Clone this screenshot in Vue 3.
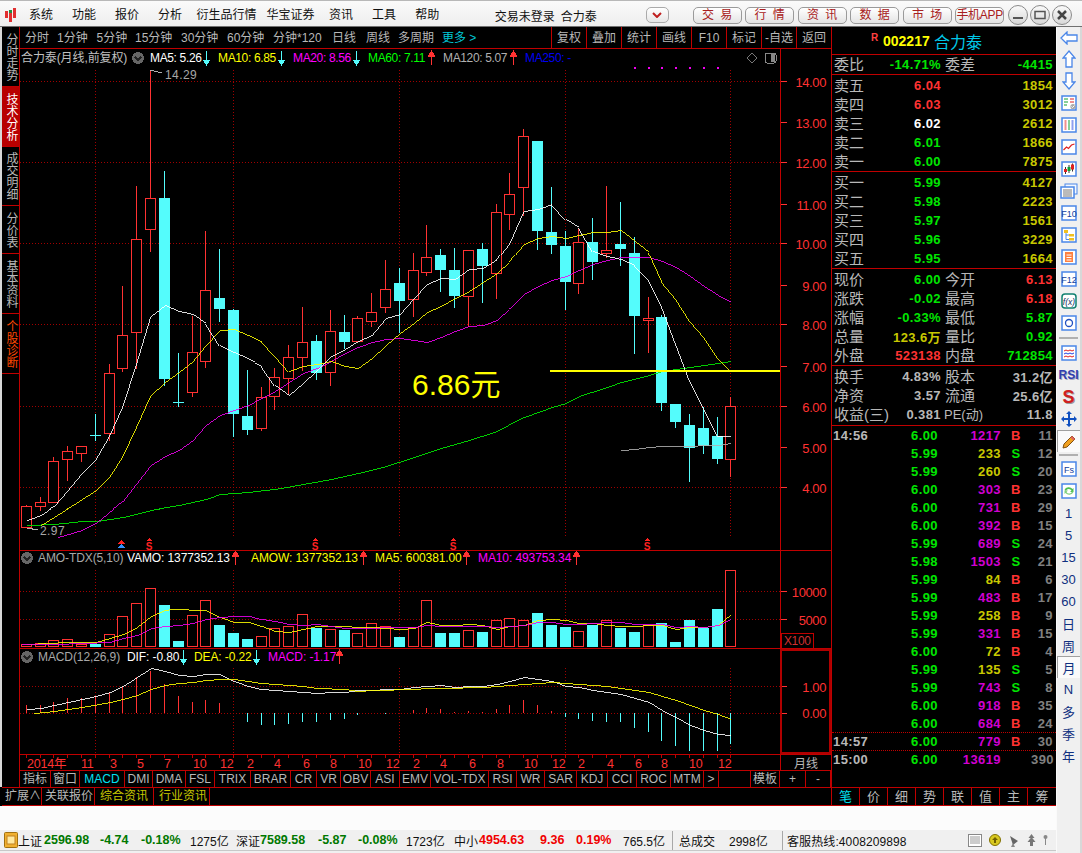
<template>
  <div class="win">
    <!-- 标题栏 -->
    <header class="titlebar">
      <svg class="logo" width="12" height="14" viewBox="0 0 12 14">
        <rect x="0" y="3" width="3" height="7" fill="#e03030" />
        <rect x="4" y="5" width="3" height="9" fill="#e03030" />
        <rect x="8" y="0" width="3" height="10" fill="#e03030" />
        <rect x="4" y="2" width="3" height="3" fill="#209040" />
      </svg>
      <nav class="menu">
        <span v-for="m in menus" :key="m" class="menu-item" :class="{ wide: m.length > 2 }">{{ m }}</span>
      </nav>
      <span class="title-text">交易未登录</span>
      <span class="title-name">合力泰</span>
      <button class="drop">
        <svg width="10" height="6" viewBox="0 0 10 6"><path d="M1 1l4 4 4-4" fill="none" stroke="#c02020" stroke-width="2" /></svg>
      </button>
      <div class="top-btns">
        <button v-for="b in topButtons" :key="b" class="top-btn" :class="{ app: b.includes('APP') }">{{ b }}</button>
      </div>
      <div class="win-btns">
        <span class="round"><svg width="14" height="14" viewBox="0 0 14 14"><path d="M2 10h10" stroke="#555" stroke-width="2" /></svg></span>
        <span class="round"><svg width="14" height="14" viewBox="0 0 14 14"><rect x="2" y="3.5" width="10" height="7" fill="none" stroke="#555" stroke-width="1.5" /></svg></span>
        <span class="round"><svg width="14" height="14" viewBox="0 0 14 14"><path d="M3 3l8 8M11 3l-8 8" stroke="#444" stroke-width="2.5" /></svg></span>
      </div>
    </header>

    <div class="body">
      <div class="col">
        <div class="main-row">
          <div class="workspace">
            <div class="top">
              <!-- 左侧竖排标签 -->
              <aside class="side">
                <div
                  v-for="t in sideTabs"
                  :key="t.name"
                  class="side-tab"
                  :class="t.cls"
                  :style="{ height: t.h + 'px' }"
                >
                  <span>{{ t.name }}</span>
                </div>
              </aside>

              <div class="center">
                <div class="tf-bar">
                  <div class="tf-list">
                    <span
                      v-for="t in periods"
                      :key="t.name"
                      class="tf"
                      :class="{ more: t.more }"
                      :style="{ width: t.w + 'px' }"
                    >{{ t.name }}</span>
                  </div>
                  <div class="tf-tools">
                    <span v-for="t in tfTools" :key="t" class="tf-tool">{{ t }}</span>
                  </div>
                </div>

                <!-- K线主图 -->
                <svg class="chart" width="811" height="502" viewBox="20 49 811 502">
                  <g class="grid">
                    <line v-for="y in mainGrid" :key="y" x1="20" x2="780" :y1="y" :y2="y" />
                    <line v-for="x in vGrid" :key="x" :x1="x" :x2="x" y1="70" y2="537" />
                  </g>
                  <g v-for="(c, i) in candles" :key="'c' + i">
                    <line :x1="c.x" :x2="c.x" :y1="c.hi" :y2="c.lo" :stroke="c.color" />
                    <rect
                      v-if="c.up"
                      :x="c.x - 5"
                      :y="c.top"
                      width="10"
                      :height="c.h"
                      fill="#000"
                      stroke="#ff3232"
                    />
                    <rect v-else :x="c.x - 5.5" :y="c.top - 0.5" width="11" :height="Math.max(c.h, 1)" fill="#54fcfc" />
                  </g>
                  <polyline class="ma" :points="ma120" stroke="#b0b0b0" />
                  <polyline class="ma" :points="ma60" stroke="#00f000" />
                  <polyline class="ma" :points="ma20" stroke="#f000f0" />
                  <polyline class="ma" :points="ma10" stroke="#ffff00" />
                  <polyline class="ma" :points="ma5" stroke="#ffffff" />

                  <rect x="550" y="370" width="230" height="2" fill="#ffff00" />
                  <text class="big" x="412" y="395">6.86元</text>

                  <path class="leader" d="M150 70l12 3" />
                  <text class="note" x="165" y="79">14.29</text>
                  <path class="leader" d="M27 528l11 2" />
                  <text class="note" x="40" y="535">2.97</text>

                  <rect v-for="x in dots" :key="x" :x="x" y="67" width="2" height="2" fill="#f000f0" />

                  <g v-for="(l, i) in legendMain" :key="l.text">
                    <text class="lg" :class="{ tight: i > 0 }" :x="l.x" y="62" :fill="l.color">{{ l.text }}</text>
                    <path v-if="l.arrow" class="arrow" :d="arrowPath(l.ax, 58, l.arrow)" :stroke="l.arrow === 'up' ? '#ff3232' : '#54fcfc'" :fill="l.arrow === 'up' ? '#ff3232' : '#54fcfc'" />
                  </g>
                  <circle cx="138" cy="58" r="6" fill="#666" />
                  <path d="M135 57l3 3 3-3" fill="none" stroke="#222" stroke-width="1.5" />
                  <path d="M752 53l5 5-5 5-5-5z" fill="none" stroke="#777" />
                  <rect x="765" y="53" width="11" height="10" rx="2" fill="#000" stroke="#888" />
                  <rect x="771" y="54" width="4" height="8" fill="#888" />

                  <g v-for="p in priceAxis" :key="p.t">
                    <line x1="781" x2="787" :y1="p.y" :y2="p.y" stroke="#ff3232" />
                    <text class="axis" x="826" :y="p.y + 5">{{ p.t }}</text>
                  </g>
                  <line x1="780.5" x2="780.5" y1="49" y2="551" stroke="#c00000" />

                  <!-- 买卖信号 -->
                  <g v-for="x in sMarks" :key="x">
                    <path :d="`M${x} 538l3 3h-6z`" fill="#ff2020" />
                    <text class="sig" :x="x" y="550">S</text>
                  </g>
                  <path d="M121 540l4 4h-8z" fill="#ff2020" />
                  <path d="M121 544l4 4h-8z" fill="#3090ff" />
                  <line x1="20" x2="831" y1="550.5" y2="550.5" stroke="#c00000" />
                </svg>

                <!-- 成交额副图 -->
                <svg class="chart" width="811" height="98" viewBox="20 551 811 98">
                  <g class="grid">
                    <line x1="20" x2="780" y1="591.5" y2="591.5" />
                    <line x1="20" x2="780" y1="619.5" y2="619.5" />
                    <line v-for="x in vGrid" :key="x" :x1="x" :x2="x" y1="570" y2="647" />
                  </g>
                  <g v-for="(b, i) in volBars" :key="'v' + i">
                    <rect v-if="b.up" :x="b.x - 5" :y="b.top" width="10" :height="646.5 - b.top" fill="#000" stroke="#ff3232" />
                    <rect v-else :x="b.x - 5.5" :y="b.top" width="11" :height="647 - b.top" fill="#54fcfc" />
                  </g>
                  <polyline class="ma" :points="volMa5" stroke="#ffff00" />
                  <polyline class="ma" :points="volMa10" stroke="#f000f0" />
                  <circle cx="27" cy="558" r="6" fill="#666" />
                  <path d="M24 557l3 3 3-3" fill="none" stroke="#222" stroke-width="1.5" />
                  <g v-for="l in legendVol" :key="l.text">
                    <text class="lg" :x="l.x" y="562" :fill="l.color">{{ l.text }}</text>
                    <path v-if="l.arrow" class="arrow" :d="arrowPath(l.ax, 558, l.arrow)" stroke="#ff3232" fill="#ff3232" />
                  </g>
                  <g v-for="p in volAxis" :key="p.t">
                    <line x1="781" x2="787" :y1="p.y" :y2="p.y" stroke="#ff3232" />
                    <text class="axis" x="826" :y="p.y + 5">{{ p.t }}</text>
                  </g>
                  <rect x="781.5" y="633.5" width="32" height="15" fill="#000" stroke="#c00000" />
                  <text class="axis left" x="784" y="645">X100</text>
                  <line x1="780.5" x2="780.5" y1="551" y2="649" stroke="#c00000" />
                  <line x1="20" x2="831" y1="648.5" y2="648.5" stroke="#c00000" />
                </svg>

                <!-- MACD副图 -->
                <svg class="chart" width="811" height="105" viewBox="20 649 811 105">
                  <g class="grid">
                    <line x1="20" x2="780" y1="686.5" y2="686.5" />
                    <line x1="20" x2="780" y1="713.5" y2="713.5" />
                    <line v-for="x in vGrid" :key="x" :x1="x" :x2="x" y1="668" y2="753" />
                  </g>
                  <line
                    v-for="(b, i) in macdBars"
                    :key="'m' + i"
                    :x1="b.x"
                    :x2="b.x"
                    y1="713"
                    :y2="b.y"
                    :stroke="b.y < 713 ? '#ff3232' : '#54fcfc'"
                  />
                  <polyline class="ma" :points="dif" stroke="#ffffff" />
                  <polyline class="ma" :points="dea" stroke="#ffff00" />
                  <circle cx="27" cy="657" r="6" fill="#666" />
                  <path d="M24 656l3 3 3-3" fill="none" stroke="#222" stroke-width="1.5" />
                  <g v-for="l in legendMacd" :key="l.text">
                    <text class="lg" :x="l.x" y="661" :fill="l.color">{{ l.text }}</text>
                    <path v-if="l.arrow" class="arrow" :d="arrowPath(l.ax, 657, l.arrow)" :stroke="l.arrow === 'up' ? '#ff3232' : '#54fcfc'" :fill="l.arrow === 'up' ? '#ff3232' : '#54fcfc'" />
                  </g>
                  <text class="axis" x="826" y="692">1.00</text>
                  <text class="axis" x="826" y="718">0.00</text>
                  <line x1="781" x2="787" y1="686.5" y2="686.5" stroke="#ff3232" />
                  <line x1="781" x2="787" y1="713.5" y2="713.5" stroke="#ff3232" />
                  <rect x="781" y="650" width="49" height="103" fill="none" stroke="#b00000" stroke-width="2" />
                </svg>

                <!-- 日期轴 -->
                <svg class="chart" width="811" height="16" viewBox="20 754 811 16">
                  <line x1="20" x2="831" y1="754.5" y2="754.5" stroke="#c00000" />
                  <line v-for="c in candles" :key="c.x" :x1="c.x" :x2="c.x" y1="755" y2="758" stroke="#c00000" />
                  <text v-for="d in dates" :key="d.x" class="date" :x="d.x" y="768">{{ d.t }}</text>
                  <line x1="780.5" x2="780.5" y1="754" y2="770" stroke="#c00000" />
                  <text class="period" x="806" y="768">月线</text>
                </svg>

                <div class="index-row">
                  <span
                    v-for="t in indexTabs"
                    :key="t.name"
                    class="index-tab"
                    :class="{ on: t.name === 'MACD' }"
                    :style="{ width: t.w + 'px' }"
                  >{{ t.name.trim() }}</span>
                </div>
              </div>
            </div>

            <div class="ext-row">
              <span class="ext first">扩展∧</span>
              <span class="ext">关联报价</span>
              <span class="ext yellow">综合资讯</span>
              <span class="ext yellow">行业资讯</span>
            </div>
          </div>

          <!-- 右侧盘口 -->
          <section class="panel">
            <div class="stock">
              <span class="r">R</span>
              <span class="code">002217</span>
              <span class="name">合力泰</span>
            </div>
            <div class="sec wei">
              <div class="row quote">
                <span class="lb">委比</span>
                <span class="v green">-14.71%</span>
                <span class="lb b2">委差</span>
                <span class="v green">-4415</span>
              </div>
            </div>
            <div class="sec book">
              <div v-for="r in sells" :key="r.l" class="row bk">
                <span class="lb">{{ r.l }}</span>
                <span class="v" :class="r.c">{{ r.p }}</span>
                <span class="v yellow">{{ r.q }}</span>
              </div>
            </div>
            <div class="sec book">
              <div v-for="r in buys" :key="r.l" class="row bk">
                <span class="lb">{{ r.l }}</span>
                <span class="v" :class="r.c">{{ r.p }}</span>
                <span class="v yellow">{{ r.q }}</span>
              </div>
            </div>
            <div class="sec book">
              <div v-for="r in quotes" :key="r[0]" class="row quote">
                <span class="lb">{{ r[0] }}</span>
                <span class="v" :class="r[2]">{{ r[1] }}</span>
                <span class="lb b2">{{ r[3] }}</span>
                <span class="v" :class="r[5]">{{ r[4] }}</span>
              </div>
            </div>
            <div class="sec book short">
              <div v-for="r in extras" :key="r[0]" class="row quote">
                <span class="lb">{{ r[0] }}</span>
                <span class="v gray">{{ r[1] }}</span>
                <span class="lb b2" :class="{ pe: r[2].startsWith('PE') }">{{ r[2] }}</span>
                <span class="v gray">{{ r[3] }}</span>
              </div>
            </div>
            <div class="trades">
              <div v-for="(t, i) in trades" :key="i" class="trade" :class="{ dotted: t.time && i > 0 }">
                <span class="t-time">{{ t.time }}</span>
                <span class="t-price">{{ t.price.toFixed(2) }}</span>
                <span class="t-vol" :class="t.vol >= 300 ? 'magenta' : 'olive'">{{ t.vol }}</span>
                <span class="t-bs" :class="t.bs === 'B' ? 'red' : 'green'">{{ t.bs }}</span>
                <span class="t-num">{{ t.n }}</span>
              </div>
            </div>
            <div class="p-tabs">
              <span v-for="(t, i) in panelTabs" :key="t" class="p-tab" :class="{ on: i === 0 }">{{ t }}</span>
            </div>
          </section>
        </div>

        <div class="band"></div>

        <!-- 状态栏 -->
        <footer class="status">
          <svg class="st-icon" width="14" height="16" viewBox="0 0 14 16">
            <rect x="0.5" y="0.5" width="13" height="15" rx="1" fill="#f0b030" stroke="#a07010" />
            <rect x="3" y="4" width="8" height="8" fill="#ffe9a0" stroke="#c08020" />
          </svg>
          <span
            v-for="(s, i) in statusItems"
            :key="i"
            class="st"
            :class="s.cls"
            :style="{ width: s.w + 'px' }"
          >{{ s.t }}</span>
          <span class="st-sep sep-a"></span>
          <span class="st sum-label">总成交</span>
          <span class="st sum-value">2998亿</span>
          <span class="st-sep"></span>
          <span class="st hotline">客服热线:4008209898</span>
          <div class="st-tools">
            <svg width="14" height="13" viewBox="0 0 14 13">
              <rect x="0.5" y="0.5" width="13" height="12" fill="#fff" stroke="#888" />
              <path d="M2 3h10M2 5h10M2 7h10M2 9h10" stroke="#999" />
            </svg>
            <svg width="12" height="12" viewBox="0 0 12 12">
              <circle cx="6" cy="6" r="5.5" fill="#d8c820" stroke="#807000" />
              <path d="M6 3l3 3H7v3H5V6H3z" fill="#706000" />
            </svg>
            <svg width="12" height="13" viewBox="0 0 12 13">
              <path d="M2 2l8 5-5 4z" fill="#666" />
              <path d="M3 13l2-4 2 4z" fill="#888" />
            </svg>
            <svg width="9" height="12" viewBox="0 0 9 12">
              <path d="M4.5 0l3 4h-6zM4.5 3l4 5H.5zM3 8h3v4H3z" fill="#777" />
            </svg>
            <svg width="5" height="12" viewBox="0 0 5 12">
              <circle cx="2.5" cy="3" r="2" fill="#888" />
              <path d="M2 4h1v7H2z" fill="#888" />
            </svg>
          </div>
        </footer>
      </div>

      <!-- 右侧工具条 -->
      <aside class="tools">
        <div class="tool first"><svg width="18" height="14" viewBox="0 0 18 14"><path class="ar" d="M1 7l6-6v3h10v6H7v3z" /></svg></div>
        <div class="tool"><svg width="14" height="18" viewBox="0 0 14 18"><path class="ar" d="M7 1l6 7h-3v9H4V8H1z" /></svg></div>
        <div class="tool"><svg width="14" height="18" viewBox="0 0 14 18"><path class="ar" d="M7 17l6-7h-3V1H4v9H1z" /></svg></div>
        <div class="tool"><svg width="16" height="16" viewBox="0 0 16 16"><rect class="ibox" x="1" y="1" width="14" height="14" /><path d="M3 4h4M3 7h4M3 10h3" stroke="#10a030" /><path d="M9 4h4M9 7h4" stroke="#e02020" /><circle cx="12" cy="11.5" r="2.6" fill="#aaa" /><path d="M10.5 11.500l1 1 2-2" stroke="#fff" fill="none" /></svg></div>
        <div class="tool"><svg width="16" height="16" viewBox="0 0 16 16"><rect class="ibox" x="1" y="1" width="14" height="14" /><path d="M3.500 4h2M3.500 6h2M3.500 8h2M3.500 10h2M3.500 12h2" stroke="#e02020" /><path d="M7 4h2M7 6h2M7 8h2M7 10h2M7 12h2" stroke="#10a030" /><path d="M10.500 4h2M10.500 6h2M10.500 8h2M10.500 10h2M10.500 12h2" stroke="#2040e0" /></svg></div>
        <div class="tool"><svg width="16" height="16" viewBox="0 0 16 16"><rect class="ibox" x="1" y="1" width="14" height="14" /><path d="M2.500 11l3-3 2 1.500 3-3.500 3-1" fill="none" stroke="#e02020" stroke-width="1.200" /></svg></div>
        <div class="tool"><svg width="16" height="16" viewBox="0 0 16 16"><rect class="ibox" x="1" y="1" width="14" height="14" /><path d="M4.500 6v7M8 4v8M11.500 2.500v8" stroke="#333" /><rect x="3" y="8" width="3" height="3" fill="#e02020" /><rect x="6.500" y="6" width="3" height="4" fill="#10a030" /><rect x="10" y="3.500" width="3" height="5" fill="#e02020" /></svg></div>
        <div class="tool"><svg width="18" height="16" viewBox="0 0 18 16"><rect x="5" y="1" width="12" height="10" fill="#f4f8ff" stroke="#4a86e8" /><rect class="ibox" x="1" y="4" width="13" height="11" /><path d="M3 7h9M3 9h9M3 11h9M3 13h9" stroke="#777" /></svg></div>
        <div class="tool"><svg width="16" height="16" viewBox="0 0 16 16"><rect class="ibox" x="1" y="1" width="14" height="14" /><text class="itx" x="8" y="12">F10</text></svg></div>
        <div class="tool"><svg width="16" height="16" viewBox="0 0 16 16"><rect class="ibox" x="1" y="1" width="14" height="14" /><rect x="3" y="3" width="4" height="3" fill="#f0c020" /><rect x="8" y="7" width="5" height="2.500" fill="#f0c020" /><rect x="8" y="11" width="5" height="2.500" fill="#f0c020" /><path d="M5 6v6.500h3M5 8h3" fill="none" stroke="#4a86e8" /></svg></div>
        <div class="tool"><svg width="16" height="16" viewBox="0 0 16 16"><rect class="ibox" x="1" y="1" width="14" height="14" /><rect x="4" y="3" width="8" height="10" fill="#ff8040" /><path d="M5.500 6h5M5.500 8.500h5M5.500 11h5" stroke="#fff" /></svg></div>
        <div class="tool"><svg width="16" height="16" viewBox="0 0 16 16"><rect class="ibox" x="1" y="1" width="14" height="14" /><text class="itx" x="8" y="12">F12</text></svg></div>
        <div class="tool"><svg width="16" height="16" viewBox="0 0 16 16"><rect x="1" y="1" width="14" height="14" rx="3" fill="#fff" stroke="#108070" stroke-width="1.500" /><text class="itx fx" x="8" y="12">f(x)</text></svg></div>
        <div class="tool"><svg width="16" height="16" viewBox="0 0 16 16"><rect class="ibox" x="1" y="1" width="14" height="14" /><circle cx="8" cy="8" r="3.500" fill="none" stroke="#2050c0" stroke-width="1.300" /></svg></div>
        <div class="sep-t big-sep"></div>
        <div class="tool"><svg width="16" height="16" viewBox="0 0 16 16"><rect class="ibox" x="1" y="1" width="14" height="14" /><path d="M3 6l2-1 2 1 2-1 2 1 2-1" fill="none" stroke="#e02020" /><path d="M3 9l2-1 2 1 2-1 2 1 2-1" fill="none" stroke="#2040e0" /><path d="M3 12l2-1 2 1 2-1 2 1 2-1" fill="none" stroke="#e02020" /></svg></div>
        <div class="tool rsi">RSI</div>
        <div class="tool ss">S</div>
        <div class="tool"><svg width="16" height="16" viewBox="0 0 16 16"><path d="M8 0l3 3H9v4h4V5l3 3-3 3V9H9v4h2l-3 3-3-3h2V9H3v2L0 8l3-3v2h4V3H5z" fill="#1050c0" /></svg></div>
        <div class="tool pressed"><svg width="16" height="16" viewBox="0 0 16 16"><path d="M11 2l3 3-8 8-4 1 1-4z" fill="#f0a020" stroke="#805010" /><path d="M11 2l3 3-1.500 1.500-3-3z" fill="#e06060" /></svg></div>
        <div class="sep-t"></div>
        <div class="tool"><svg width="16" height="16" viewBox="0 0 16 16"><rect class="ibox blue" x="1" y="1" width="14" height="14" /><text class="itx" x="8" y="12">Fs</text></svg></div>
        <div class="tool"><svg width="16" height="16" viewBox="0 0 16 16"><rect class="ibox" x="1" y="1" width="14" height="14" /><path d="M3.500 7a4.500 4 0 0 1 8-1l1-1v4H9l1.500-1.500A3 3 0 0 0 5 8z" fill="#50c050" /><path d="M12.500 9a4.500 4 0 0 1-8 1l-1 1V7.500H7L5.500 9A3 3 0 0 0 11 8.500z" fill="#80d080" /></svg></div>
        <div v-for="p in periodTools" :key="p" class="tool txt" :class="{ pressed: p === '月' }">{{ p }}</div>
      </aside>
    </div>
  </div>
</template>

<script setup>
const menus = ['系统', '功能', '报价', '分析', '衍生品行情', '华宝证券', '资讯', '工具', '帮助'];
const topButtons = ['交 易', '行 情', '资 讯', '数 据', '市 场', '手机APP'];
const sideTabs = [
  { name: '分时走势', h: 60 },
  { name: '技术分析', h: 60, cls: 'active' },
  { name: '成交明细', h: 59 },
  { name: '分价表', h: 48 },
  { name: '基本资料', h: 60 },
  { name: '个股诊断', h: 60, cls: 'diag' },
];
const periods = [
  { name: '分时', w: 32 },
  { name: '1分钟', w: 39.5 },
  { name: '5分钟', w: 38.5 },
  { name: '15分钟', w: 46 },
  { name: '30分钟', w: 46 },
  { name: '60分钟', w: 46 },
  { name: '分钟*120', w: 59 },
  { name: '日线', w: 34 },
  { name: '周线', w: 32 },
  { name: '多周期', w: 44 },
  { name: '更多 >', w: 44, more: true },
];
const tfTools = ['复权', '叠加', '统计', '画线', 'F10', '标记', '-自选', '返回'];
const indexTabs = [
  ['指标', 31], ['窗口', 29], ['MACD', 45], ['DMI', 28], ['DMA', 33], ['FSL', 29], ['TRIX', 36], ['BRAR', 40],
  ['CR', 26], ['VR', 24], ['OBV', 30], ['ASI', 29], ['EMV', 31], ['VOL-TDX', 58], ['RSI', 28], ['WR', 28],
  ['SAR', 32], ['KDJ', 31], ['CCI', 29], ['ROC', 34], ['MTM', 33], ['>', 15], [' ', 32], ['模板', 29], ['+', 26], ['-', 25],
].map(([name, w]) => ({ name, w }));
const panelTabs = ['笔', '价', '细', '势', '联', '值', '主', '筹'];
const periodTools = ['1', '5', '15', '30', '60', '日', '周', '月', 'N', '多', '季', '年'];

// 图上的坐标是从截图量出来的（放大3倍的像素），这里换算回原始像素
const px = (v) => Math.floor(v / 3) + 0.5;
function pts(a, b, base) {
  const parse = (s, off) =>
    s.trim().split(/\s+/).filter(Boolean).map((p) => {
      const [x, y] = p.split(',').map(Number);
      return `${px(x + off)},${base + px(y)}`;
    });
  return [...parse(a, 0), ...parse(b, 1260)].join(' ');
}

// x, 最高, 开盘上沿, 下沿, 最低, 颜色
const rawCandles = [
  [79, 1333, 1340, 1403, 1403, 'r'], [121, 1308, 1328, 1340, 1352, 'r'], [160, 1190, 1204, 1328, 1328, 'r'],
  [202, 1156, 1174, 1198, 1260, 'r'], [244, 1160, 1160, 1180, 1205, 'r'], [286, 1060, 1125, 1127, 1140, 'c'],
  [328, 910, 940, 1120, 1142, 'r'], [367, 675, 826, 926, 935, 'r'], [409, 376, 538, 818, 925, 'r'],
  [451, 30, 415, 508, 575, 'r'], [493, 330, 414, 957, 975, 'c'], [535, 876, 1028, 1030, 1038, 'c'],
  [577, 765, 877, 998, 1010, 'r'], [616, 510, 691, 905, 923, 'r'], [658, 565, 714, 747, 785, 'c'],
  [700, 745, 750, 1062, 1130, 'c'], [742, 927, 1068, 1110, 1122, 'c'], [784, 978, 1012, 1106, 1112, 'r'],
  [823, 922, 952, 1010, 1047, 'r'], [865, 852, 892, 956, 1002, 'r'], [907, 738, 847, 893, 932, 'r'],
  [949, 822, 843, 939, 958, 'c'], [991, 747, 814, 938, 975, 'r'], [1033, 762, 816, 846, 865, 'c'],
  [1072, 765, 775, 843, 843, 'r'], [1114, 696, 757, 785, 800, 'r'], [1156, 597, 688, 743, 756, 'r'],
  [1198, 622, 669, 725, 818, 'c'], [1240, 576, 631, 718, 768, 'r'], [1279, 492, 592, 638, 645, 'r'],
  [1321, 564, 585, 630, 693, 'c'], [1363, 561, 630, 708, 741, 'c'], [1405, 568, 571, 710, 800, 'r'],
  [1447, 546, 567, 618, 726, 'c'], [1489, 430, 457, 641, 714, 'r'], [1528, 336, 403, 464, 507, 'r'],
  [1570, 205, 229, 382, 467, 'r'], [1612, 243, 243, 513, 567, 'c'], [1654, 378, 516, 555, 579, 'c'],
  [1696, 510, 558, 666, 747, 'c'], [1735, 503, 547, 671, 699, 'r'], [1777, 471, 546, 606, 657, 'c'],
  [1819, 375, 571, 581, 591, 'r'], [1861, 423, 552, 567, 615, 'c'], [1903, 528, 579, 768, 879, 'c'],
  [1945, 708, 775, 782, 876, 'r'], [1984, 763, 771, 1029, 1050, 'c'], [2026, 1032, 1032, 1086, 1101, 'c'],
  [2068, 1059, 1095, 1164, 1263, 'c'], [2110, 1040, 1104, 1158, 1179, 'c'], [2152, 1068, 1128, 1197, 1209, 'c'],
  [2191, 1008, 1040, 1199, 1248, 'r'],
];
const candles = rawCandles.map(([x, hi, top, bot, lo, c]) => ({
  x: px(x),
  hi: 60 + px(hi),
  lo: 60 + px(lo),
  top: 60 + px(top),
  h: Math.floor(bot / 3) - Math.floor(top / 3),
  up: c === 'r',
  color: c === 'r' ? '#ff3232' : '#54fcfc',
}));

const ma5 = pts(
  '79,1382 121,1365 160,1340 202,1290 244,1240 286,1197 328,1125 367,1040 409,910 451,770 493,736 535,755 577,762 616,790 658,856 700,877 742,895 784,918 823,975 865,1006 907,970 949,930 991,888 1033,867 1072,843 1114,825 1156,775 1198,762 1240,715',
  '19,672 61,654 103,658 145,628 187,624 229,597 268,550 310,455 352,447 394,433 436,478 475,502 517,575 559,590 601,598 643,615 685,658 724,740 766,850 808,960 850,1045 892,1128 931,1129',
  60
);
const ma10 = pts(
  '121,1397 160,1372 202,1345 244,1318 286,1292 328,1250 367,1190 409,1100 451,1005 493,968 535,937 577,905 616,855 658,812 700,808 742,825 784,843 823,885 865,933 907,920 949,912 991,905 1033,920 1072,925 1114,895 1156,855 1198,820 1240,790',
  '19,758 61,738 103,715 145,695 187,668 229,640 268,605 310,552 352,535 394,530 436,536 475,527 517,518 559,517 601,510 643,545 685,578 724,665 766,715 808,780 850,828 892,892 931,930',
  60
);
const ma20 = pts(
  '172,1432 244,1410 290,1386 367,1325 409,1270 451,1215 493,1190 535,1170 577,1140 616,1095 658,1065 700,1052 742,1035 784,1015 823,993 865,967 907,940 949,925 991,905 1033,880 1072,862 1114,846 1156,838 1198,835 1240,840',
  '19,847 61,832 103,815 145,800 187,796 229,782 268,745 310,703 352,680 394,660 436,650 475,630 517,612 559,600 601,593 643,592 685,592 724,603 766,622 808,650 850,680 892,705 931,727',
  60
);
const ma60 = pts(
  '79,1396 160,1392 244,1385 290,1384 367,1372 451,1350 535,1335 616,1318 658,1304 742,1297 823,1287 907,1272 991,1257 1072,1240 1156,1220 1240,1192',
  '61,1165 145,1142 229,1115 310,1072 394,1042 436,1030 475,1010 559,983 601,967 685,945 724,935 766,927 850,915 931,904',
  60
);
const ma120 = pts('', '601,1171 643,1167 685,1163 724,1160 808,1158 850,1157 892,1155 931,1150', 60);

const volTops = [
  313, 310, 301, 298, 313, 311, 283, 230, 190, 145, 192, 300, 226, 181, 252, 276, 294, 289, 265, 259, 223, 261, 268,
  267, 280, 250, 258, 288, 262, 181, 276, 276, 271, 273, 241, 235, 241, 216, 252, 258, 274, 252, 241, 261, 273, 256,
  246, 303, 237, 262, 204, 91,
];
const volBars = volTops.map((t, i) => ({ x: candles[i].x, up: candles[i].up, top: 540 + px(t) }));
const volMa5 = pts(
  '79,314 202,308 286,307 328,295 367,283 409,262 451,230 493,212 512,208 616,212 658,232 700,246 745,247 784,260 823,275 865,277 907,268 949,259 991,258 1033,258 1072,262 1114,263 1156,265 1198,267 1240,265',
  '19,248 61,255 103,256 145,253 187,255 229,268 268,260 310,255 352,241 394,238 436,241 475,250 517,251 559,256 601,258 643,259 685,255 724,256 766,268 808,263 850,262 892,255 931,222',
  540
);
const volMa10 = pts(
  '65,314 160,313 244,311 328,307 367,295 409,285 451,265 493,260 535,256 577,250 616,238 658,233 700,230 745,230 784,238 823,245 865,253 907,256 949,254 991,260 1033,264 1072,264 1114,264 1156,263 1198,263 1240,262',
  '19,256 61,258 103,258 145,258 187,258 229,262 268,258 310,257 352,248 394,247 436,254 475,252 517,250 559,247 601,247 643,252 685,254 724,254 766,262 808,260 850,262 892,255 931,238',
  540
);

const macdEnds = [
  497, 495, 486, 476, 474, 470, 458, 443, 412, 393, 432, 470, 486, 482, 489, 520, 548, 556, 557, 552, 546, 548, 540,
  537, 527, 520, 523, 520, 510, 504, 507, 516, 513, 516, 507, 497, 480, 497, 513, 533, 537, 545, 548, 548, 566, 578,
  603, 620, 635, 635, 635, 614,
];
const macdBars = macdEnds.map((e, i) => ({ x: candles[i].x, y: 540 + Math.floor(e / 3) }));
const dif = pts(
  '79,507 121,505 160,495 202,488 244,479 286,470 328,457 367,438 409,413 451,386 493,394 535,407 577,408 616,402 658,402 700,425 742,440 784,449 823,452 865,455 907,457 949,460 991,457 1033,456 1072,452 1114,451 1156,449 1198,447 1240,441',
  '19,440 61,436 103,442 145,439 187,439 229,433 268,423 310,412 352,418 394,425 436,438 475,443 517,451 559,456 601,462 643,476 685,487 724,512 766,533 808,556 850,571 892,583 931,587',
  540
);
const dea = pts(
  '100,519 160,514 244,501 328,487 367,478 409,465 451,448 493,437 535,431 577,426 616,422 658,417 700,418 742,425 784,430 823,433 865,436 907,440 949,444 1033,447 1072,453 1114,452 1156,450 1198,449 1240,447',
  '19,446 61,444 103,444 145,441 187,441 229,438 268,436 310,432 352,430 394,428 436,431 475,434 517,437 559,440 601,444 643,451 685,457 724,470 766,482 808,497 850,510 892,524 931,538',
  540
);

const mainGrid = [81.5, 162.5, 243.5, 324.5, 406.5, 487.5];
const vGrid = [95.5, 233.5, 399.5, 565.5, 730.5];
const dots = [634, 648, 661, 675, 689, 703, 717];
const sMarks = [149, 315, 453, 647];
const priceAxis = [
  ['14.00', 81.5], ['13.00', 122.5], ['12.00', 162.5], ['11.00', 204.5], ['10.00', 243.5], ['9.00', 285.5],
  ['8.00', 324.5], ['7.00', 366.5], ['6.00', 406.5], ['5.00', 447.5], ['4.00', 487.5],
].map(([t, y]) => ({ t, y }));
const volAxis = [{ t: '10000', y: 591.5 }, { t: '5000', y: 619.5 }];

const legendMain = [
  { x: 21, text: '合力泰(月线,前复权)', color: '#c0c0c0' },
  { x: 150, text: 'MA5: 5.26', color: '#fff', arrow: 'down', ax: 206 },
  { x: 218, text: 'MA10: 6.85', color: '#ff0', arrow: 'down', ax: 281 },
  { x: 293, text: 'MA20: 8.56', color: '#f0f', arrow: 'down', ax: 356 },
  { x: 368, text: 'MA60: 7.11', color: '#0f0', arrow: 'up', ax: 431 },
  { x: 443, text: 'MA120: 5.07', color: '#b0b0b0', arrow: 'up', ax: 513 },
  { x: 525, text: 'MA250: -', color: '#0000f0' },
];
const legendVol = [
  { x: 38, text: 'AMO-TDX(5,10)', color: '#a8a8a8' },
  { x: 127, text: 'VAMO: 1377352.13', color: '#fff', arrow: 'up', ax: 235 },
  { x: 251, text: 'AMOW: 1377352.13', color: '#ff0', arrow: 'up', ax: 363 },
  { x: 375, text: 'MA5: 600381.00', color: '#ff0', arrow: 'up', ax: 466 },
  { x: 478, text: 'MA10: 493753.34', color: '#f0f', arrow: 'up', ax: 576 },
];
const legendMacd = [
  { x: 38, text: 'MACD(12,26,9)', color: '#a8a8a8' },
  { x: 127, text: 'DIF: -0.80', color: '#fff', arrow: 'down', ax: 183 },
  { x: 194, text: 'DEA: -0.22', color: '#ff0', arrow: 'down', ax: 256 },
  { x: 268, text: 'MACD: -1.17', color: '#f0f', arrow: 'up', ax: 339 },
];

// 指标后面的小箭头
function arrowPath(x, y, dir) {
  const c = x + 0.5;
  return dir === 'up'
    ? `M${c} ${y + 7}V${y - 2}M${c - 3} ${y - 2}L${c} ${y - 7}L${c + 3} ${y - 2}Z`
    : `M${c} ${y - 7}V${y + 2}M${c - 3} ${y + 2}L${c} ${y + 7}L${c + 3} ${y + 2}Z`;
}

const dates = [
  [27, '2014年'], [81, '11'], [110, '3'], [137, '5'], [164, '7'], [193, '10'], [220, '12'], [247, '2'], [274, '4'],
  [303, '6'], [330, '8'], [358, '10'], [386, '12'], [413, '2'], [440, '4'], [469, '6'], [497, '8'], [524, '10'],
  [552, '12'], [578, '2'], [607, '4'], [635, '6'], [661, '8'], [689, '10'], [718, '12'],
].map(([x, t]) => ({ x, t }));

const sells = [
  { l: '卖五', p: '6.04', q: 1854, c: 'red' },
  { l: '卖四', p: '6.03', q: 3012, c: 'red' },
  { l: '卖三', p: '6.02', q: 2612, c: 'white' },
  { l: '卖二', p: '6.01', q: 1866, c: 'green' },
  { l: '卖一', p: '6.00', q: 7875, c: 'green' },
];
const buys = [
  { l: '买一', p: '5.99', q: 4127, c: 'green' },
  { l: '买二', p: '5.98', q: 2223, c: 'green' },
  { l: '买三', p: '5.97', q: 1561, c: 'green' },
  { l: '买四', p: '5.96', q: 3229, c: 'green' },
  { l: '买五', p: '5.95', q: 1664, c: 'green' },
];
const quotes = [
  ['现价', '6.00', 'green', '今开', '6.13', 'red'],
  ['涨跌', '-0.02', 'green', '最高', '6.18', 'red'],
  ['涨幅', '-0.33%', 'green', '最低', '5.87', 'green'],
  ['总量', '123.6万', 'yellow', '量比', '0.92', 'green'],
  ['外盘', '523138', 'red', '内盘', '712854', 'green'],
];
const extras = [
  ['换手', '4.83%', '股本', '31.2亿'],
  ['净资', '3.57', '流通', '25.6亿'],
  ['收益(三)', '0.381', 'PE(动)', '11.8'],
];
const trades = [
  ['14:56', 6.0, 1217, 'B', 11], ['', 5.99, 233, 'S', 12], ['', 5.99, 260, 'S', 20], ['', 6.0, 303, 'B', 23],
  ['', 6.0, 731, 'B', 29], ['', 6.0, 392, 'B', 15], ['', 5.99, 689, 'S', 24], ['', 5.98, 1503, 'S', 21],
  ['', 5.99, 84, 'B', 6], ['', 5.99, 483, 'B', 17], ['', 5.99, 258, 'B', 9], ['', 5.99, 331, 'B', 15],
  ['', 6.0, 72, 'B', 4], ['', 5.99, 135, 'S', 5], ['', 5.99, 743, 'S', 8], ['', 6.0, 918, 'B', 35],
  ['', 6.0, 684, 'B', 24], ['14:57', 6.0, 779, 'B', 30], ['15:00', 6.0, 13619, '', 390],
].map(([time, price, vol, bs, n]) => ({ time, price, vol, bs, n }));

const statusItems = [
  { t: '上证', w: 26 },
  { t: '2596.98', w: 56, cls: 'n dg' },
  { t: '-4.74', w: 41, cls: 'n dg' },
  { t: '-0.18%', w: 49, cls: 'n dg' },
  { t: '1275亿', w: 46 },
  { t: '深证', w: 24 },
  { t: '7589.58', w: 58, cls: 'n dg' },
  { t: '-5.87', w: 40, cls: 'n dg' },
  { t: '-0.08%', w: 48, cls: 'n dg' },
  { t: '1723亿', w: 48 },
  { t: '中小', w: 25 },
  { t: '4954.63', w: 61, cls: 'n rd' },
  { t: '9.36', w: 36, cls: 'n rd' },
  { t: '0.19%', w: 47, cls: 'n rd' },
  { t: '765.5亿', w: 49 },
];
</script>

<style scoped>
.win {
  width: 1082px;
  height: 853px;
  overflow: hidden;
  background: #f0f0f0;
  font-family: "Liberation Sans", "Noto Sans CJK SC", sans-serif;
  font-size: 12px;
}

/* 标题栏 */
.titlebar {
  height: 27px;
  box-sizing: border-box;
  display: flex;
  align-items: center;
  padding-top: 3px;
  border-top: 1px solid #b8b8b8;
  border-bottom: 1px solid #707070;
  background: linear-gradient(#fafafa, #eeeeee);
  color: #111;
}
.logo {
  margin-left: 5px;
  flex: none;
}
.menu {
  display: flex;
  margin-left: 2.5px;
}
.menu-item {
  padding: 0 9.5px;
  line-height: 20px;
}
.menu-item.wide {
  padding: 0 5px;
}
.title-text {
  margin-left: 46px;
}
.title-name {
  margin-left: 6px;
}
.drop {
  margin-left: 49px;
  width: 23px;
  height: 16px;
  padding: 0;
  display: flex;
  align-items: center;
  justify-content: center;
  border: 1px solid #aaa;
  border-radius: 5px;
  background: linear-gradient(#fff, #e6e6e6);
}
.top-btns {
  display: flex;
  gap: 3.5px;
  margin-left: 24px;
}
.top-btn {
  width: 49px;
  height: 17px;
  padding: 0;
  border: 1px solid #9a9a9a;
  border-radius: 5px;
  background: linear-gradient(#fff, #e4e4e4);
  color: #a82020;
  font: 12px "Liberation Sans", "Noto Sans CJK SC", sans-serif;
  line-height: 15px;
  word-spacing: 3px;
}
.top-btn.app {
  letter-spacing: -0.3px;
}
.win-btns {
  display: flex;
  gap: 2px;
  margin-left: 4px;
}
.round {
  width: 18px;
  height: 18px;
  border: 1px solid #8a8a8a;
  border-radius: 50%;
  background: linear-gradient(#fafafa, #d8d8d8);
  display: flex;
  align-items: center;
  justify-content: center;
}

.body {
  display: flex;
  height: 826px;
}
.col {
  width: 1056px;
  flex: none;
  display: flex;
  flex-direction: column;
}
.main-row {
  display: flex;
  height: 779px;
  flex: none;
}

/* 主工作区 */
.workspace {
  width: 831px;
  flex: none;
  background: #000;
  display: flex;
  flex-direction: column;
}
.top {
  display: flex;
  height: 760px;
  flex: none;
}
.side {
  width: 20px;
  flex: none;
  box-sizing: border-box;
  border-left: 2px solid #d8d8d8;
  border-right: 1px solid #c00000;
  background: #000;
}
.side-tab {
  box-sizing: border-box;
  border-bottom: 1px solid #c00000;
  display: flex;
  align-items: center;
  justify-content: center;
  color: #b8b8b8;
}
.side-tab span {
  writing-mode: vertical-rl;
  text-orientation: upright;
  line-height: 17px;
}
.side-tab.active {
  background: #b80000;
  color: #fff;
}
.side-tab.diag {
  color: #ff4800;
}
.center {
  width: 811px;
  flex: none;
}
.tf-bar {
  height: 22px;
  box-sizing: border-box;
  display: flex;
  justify-content: space-between;
  border-bottom: 1px solid #c00000;
  color: #b8b8b8;
  line-height: 23px;
}
.tf-list {
  display: flex;
  padding-left: 5px;
}
.tf {
  flex: none;
  white-space: nowrap;
}
.tf.more {
  color: #00c8d8;
}
.tf-tools {
  display: flex;
  width: 280px;
  height: 21px;
}
.tf-tool {
  width: 35px;
  box-sizing: border-box;
  border-left: 1px solid #c00000;
  text-align: center;
}
.chart {
  display: block;
  background: #000;
  shape-rendering: crispEdges;
}
.chart text {
  font-family: "Liberation Sans", "Noto Sans CJK SC", sans-serif;
  font-size: 12px;
}
.grid line {
  stroke: #a00000;
  stroke-dasharray: 1 2;
}
.ma {
  fill: none;
  stroke-width: 0.85;
}
.arrow {
  stroke-width: 1;
}
.leader {
  fill: none;
  stroke: #b0b0b0;
}
.chart .big {
  font-size: 30px;
  fill: #ffff00;
}
.chart .note {
  font-size: 12px;
  letter-spacing: 0.4px;
  fill: #a8a8a8;
}
.chart .lg {
  letter-spacing: -0.1px;
}
.chart .lg.tight {
  letter-spacing: -0.35px;
}
.chart .axis {
  font-size: 13px;
  letter-spacing: -0.4px;
  fill: #ff3232;
  text-anchor: end;
}
.chart .axis.left {
  text-anchor: start;
  font-size: 12px;
  fill: #d03030;
}
.chart .sig {
  font-size: 10px;
  font-weight: 700;
  fill: #ff2020;
  text-anchor: middle;
}
.chart .date {
  font-size: 12.5px;
  letter-spacing: -0.2px;
  fill: #ff3232;
}
.chart .period {
  fill: #b8b8b8;
  text-anchor: middle;
}

.index-row {
  height: 17px;
  box-sizing: border-box;
  display: flex;
  border-top: 1px solid #c00000;
  color: #b8b8b8;
  line-height: 16px;
}
.index-tab {
  flex: none;
  box-sizing: border-box;
  border-right: 1px solid #c00000;
  text-align: center;
  white-space: nowrap;
  overflow: hidden;
}
.index-tab.on {
  color: #00e0f0;
}
.ext-row {
  height: 19px;
  box-sizing: border-box;
  display: flex;
  margin-left: 2px;
  border-top: 1px solid #c00000;
  border-bottom: 1px solid #c00000;
  color: #b8b8b8;
  line-height: 17px;
}
.ext {
  box-sizing: border-box;
  width: 53px;
  padding-left: 3px;
  border-right: 1px solid #c00000;
  white-space: nowrap;
}
.ext.first {
  width: 40px;
}
.ext.yellow {
  color: #c8c800;
  width: 59px;
  padding-left: 5px;
}
.ext.yellow:last-child {
  width: 56px;
}

.band {
  height: 24px;
  flex: none;
  background: #fcfcfc;
}

/* 状态栏 */
.status {
  height: 21px;
  flex: none;
  box-sizing: border-box;
  display: flex;
  align-items: center;
  padding-left: 4px;
  background: #f0f0f0;
  border-bottom: 1px solid #c8c8c8;
  color: #111;
}
.st-icon {
  flex: none;
}
.st {
  flex: none;
  white-space: nowrap;
}
.st.n {
  font-size: 12.5px;
  font-weight: 700;
}
.st.dg {
  color: #007800;
}
.st.rd {
  color: #f00000;
}
.sum-label {
  width: 50px;
}
.sum-value {
  width: 52px;
}
.st-sep {
  width: 1px;
  height: 19px;
  margin: 0 6px 0 1px;
  background: #a8a8a8;
}
.st-sep.sep-a {
  margin-left: 0;
}
.hotline {
  margin-left: -2px;
  letter-spacing: 0.1px;
}
.st-tools {
  margin-left: auto;
  display: flex;
  align-items: center;
  gap: 7px;
  margin-right: 8px;
}

/* 右侧盘口 */
.panel {
  width: 225px;
  flex: none;
  background: #000;
  display: flex;
  flex-direction: column;
  box-sizing: border-box;
  border-left: 1px solid #c00000;
}
.stock {
  height: 28px;
  box-sizing: border-box;
  display: flex;
  align-items: center;
  padding-left: 39px;
  border-bottom: 1px solid #c00000;
  flex: none;
}
.r {
  color: #ff4040;
  font-size: 10px;
  font-weight: 700;
  align-self: flex-start;
  margin-top: 5px;
  width: 12px;
}
.code {
  color: #ffff00;
  font-size: 14px;
  font-weight: 700;
  width: 51px;
}
.name {
  color: #00c8e8;
  font-size: 16px;
}
.sec {
  flex: none;
  box-sizing: border-box;
  border-bottom: 1px solid #c00000;
}
.wei {
  height: 20px;
}
.book {
  height: 97px;
  padding-top: 1px;
}
.book.short {
  height: 60px;
}
.row {
  height: 19px;
  padding: 0 3px 0 2px;
  align-items: center;
  white-space: nowrap;
}
.bk {
  display: grid;
  grid-template-columns: 36px 71px 1fr;
}
.quote {
  display: grid;
  grid-template-columns: 36px 71px 41px 1fr;
}
.lb {
  font-size: 15px;
  color: #b8b8b8;
  line-height: 19px;
}
.b2 {
  padding-left: 4px;
}
.pe {
  font-size: 13px;
  padding-left: 3px;
}
.v {
  font-size: 13px;
  font-weight: 700;
  letter-spacing: 0.4px;
  text-align: right;
}
.red {
  color: #ff3232;
}
.green {
  color: #00e600;
}
.yellow {
  color: #c8c800;
}
.white {
  color: #fff;
}
.gray {
  color: #b8b8b8;
}

.trades {
  flex: 1;
  min-height: 0;
}
.trade {
  height: 18px;
  box-sizing: border-box;
  display: grid;
  grid-template-columns: 36px 69px 63px 30px 1fr;
  padding: 0 3px 0 1px;
  align-items: center;
  font-size: 13px;
  font-weight: 700;
  letter-spacing: 0.4px;
  line-height: 17px;
}
.trade.dotted {
  border-top: 1px dotted #c00000;
}
.t-time {
  color: #b8b8b8;
  white-space: nowrap;
}
.t-price {
  color: #00e600;
  text-align: right;
}
.t-vol {
  text-align: right;
}
.magenta {
  color: #d000d0;
}
.olive {
  color: #c8c800;
}
.t-bs {
  text-align: center;
}
.t-num {
  color: #808080;
  text-align: right;
}
.p-tabs {
  height: 19px;
  box-sizing: border-box;
  display: flex;
  flex: none;
  border-top: 1px solid #c00000;
  border-bottom: 1px solid #c00000;
  color: #b8b8b8;
  font-size: 13px;
  line-height: 17px;
}
.p-tab {
  width: 28px;
  box-sizing: border-box;
  border-right: 1px solid #c00000;
  text-align: center;
}
.p-tab:last-child {
  border-right: none;
}
.p-tab.on {
  color: #00e0f0;
}

/* 右侧工具条 */
.tools {
  width: 26px;
  flex: none;
  box-sizing: border-box;
  background: #f0f0f0;
  border-left: 1px solid #fafafa;
  border-right: 2px solid #d8d8d8;
}
.tool {
  height: 22px;
  display: flex;
  align-items: center;
  justify-content: center;
}
.tool.first {
  height: 21px;
}
.tool.txt {
  color: #103080;
  font-size: 13px;
}
.tool.pressed {
  box-sizing: border-box;
  background: #fafafa;
  border-top: 1px solid #a0a0a0;
  border-left: 1px solid #a0a0a0;
}
.tool.rsi {
  color: #3040b0;
  font-size: 12px;
  font-weight: 700;
  text-shadow: 1px 1px 0 #aab;
}
.tool.ss {
  color: #d02020;
  font-size: 18px;
  font-weight: 700;
  text-shadow: 1px 1px 0 #999;
}
.sep-t {
  height: 6px;
  display: flex;
  align-items: center;
}
.sep-t.big-sep {
  height: 8px;
}
.sep-t::after {
  content: "";
  width: 100%;
  margin: 0 2px;
  height: 2px;
  background: #b0b0b0;
}
.ar {
  fill: #fff;
  stroke: #4a86e8;
  stroke-width: 1.3;
}
.ibox {
  fill: #fff;
  stroke: #4a86e8;
  stroke-width: 1.5;
}
.itx {
  font-family: "Liberation Sans", sans-serif;
  font-size: 9px;
  fill: #1040a0;
  text-anchor: middle;
}
.itx.fx {
  font-size: 8.5px;
  font-style: italic;
  fill: #103060;
}
</style>

<style>
html,
body {
  margin: 0;
  background: #f0f0f0;
}
</style>
